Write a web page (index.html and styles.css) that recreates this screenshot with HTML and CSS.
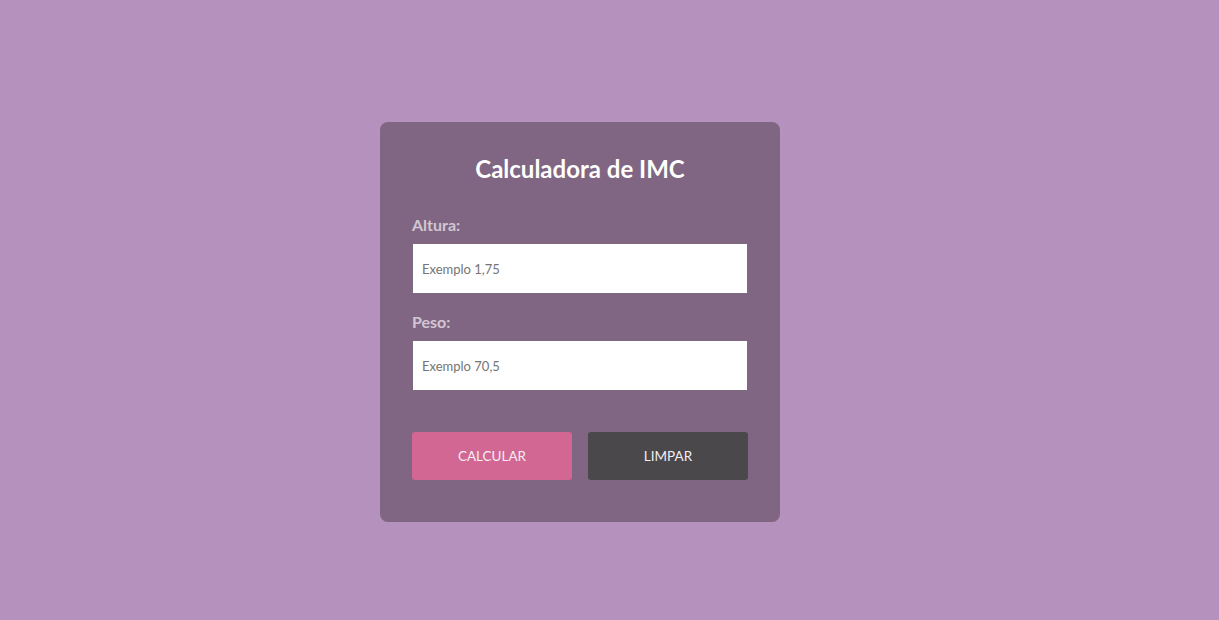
FILE: index.html
```html
<!DOCTYPE html>
<html lang="pt-BR">
<head>
<meta charset="utf-8">
<title>Calculadora de IMC</title>
<link rel="stylesheet" href="styles.css">
</head>
<body>
<main class="page">
  <section class="card">
    <h1 class="title">Calculadora de IMC</h1>
    <form class="form">
      <div class="field">
        <label class="label" for="altura">Altura:</label>
        <input class="input" id="altura" type="text" placeholder="Exemplo 1,75">
      </div>
      <div class="field">
        <label class="label" for="peso">Peso:</label>
        <input class="input" id="peso" type="text" placeholder="Exemplo 70,5">
      </div>
      <div class="actions">
        <button type="button" class="btn btn-primary">CALCULAR</button>
        <button type="button" class="btn btn-dark">LIMPAR</button>
      </div>
    </form>
  </section>
</main>
</body>
</html>
```
FILE: styles.css
```css
* { box-sizing: border-box; }
html, body { margin: 0; padding: 0; }
body {
  background: #b592bd;
  font-family: Lato, "Noto Sans", sans-serif;
  min-height: 620px;
}
.page {
  padding: 122px 0 0 380px;
}
.card {
  width: 400px;
  height: 400px;
  background: #806682;
  border-radius: 8px;
  padding: 32px 32px 42px;
}
.title {
  margin: 0;
  text-align: center;
  color: #ffffff;
  font-size: 24px;
  line-height: 29px;
  font-weight: 700;
}
.form {
  display: flex;
  flex-direction: column;
  margin-top: 32px;
}
.field {
  display: flex;
  flex-direction: column;
  gap: 9px;
}
.field + .field { margin-top: 18px; }
.label {
  color: #d2c6d3;
  font-size: 16px;
  line-height: 19px;
  font-weight: 700;
}
.input {
  width: 336px;
  height: 51px;
  border: 1px solid #7c6b7e;
  background: #ffffff;
  padding: 0 9px;
  font-family: Lato, sans-serif;
  font-size: 13px;
  color: #333;
  outline: none;
}
.input::placeholder { color: #757575; opacity: 1; }
.actions {
  display: flex;
  gap: 16px;
  margin-top: 41px;
}
.btn {
  width: 160px;
  height: 48px;
  border: none;
  border-radius: 3px;
  font-family: Lato, sans-serif;
  font-size: 13.5px;
  color: #f2eef2;
  cursor: pointer;
}
.btn-primary { background: #d36793; }
.btn-dark { background: #4a484b; }
```
